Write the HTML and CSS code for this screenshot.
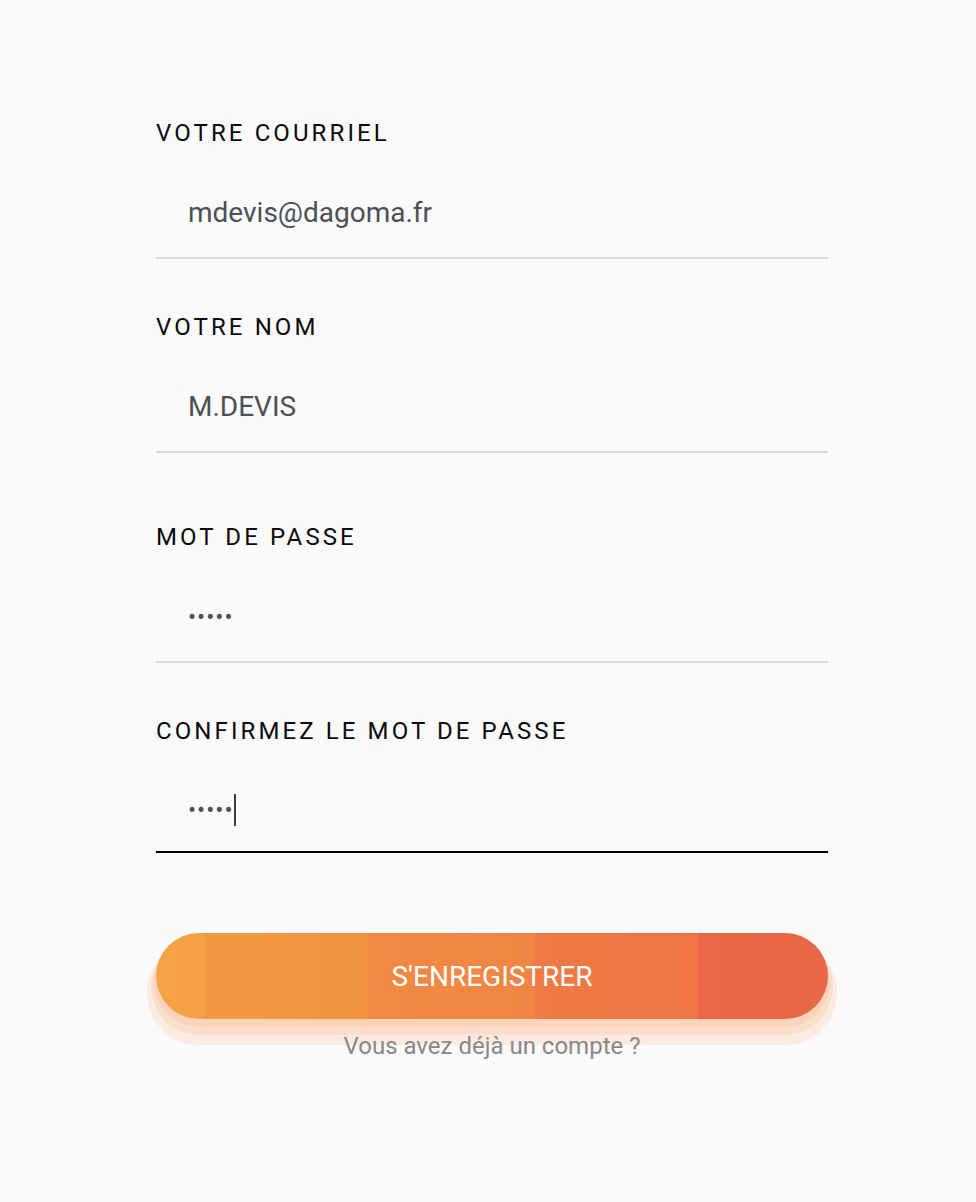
FILE: index.html
```html
<!DOCTYPE html>
<html lang="fr">
<head>
<meta charset="utf-8">
<title>S'enregistrer</title>
<link rel="stylesheet" href="styles.css">
</head>
<body>
<main class="page">
  <form class="form">
    <div class="field">
      <label class="label">VOTRE COURRIEL</label>
      <div class="control"><span class="value">mdevis@dagoma.fr</span></div>
    </div>
    <div class="field field-gap">
      <label class="label">VOTRE NOM</label>
      <div class="control"><span class="value">M.DEVIS</span></div>
    </div>
    <div class="field">
      <label class="label">MOT DE PASSE</label>
      <div class="control"><span class="dots">•••••</span></div>
    </div>
    <div class="field field-last">
      <label class="label">CONFIRMEZ LE MOT DE PASSE</label>
      <div class="control focused"><span class="dots">•••••</span><span class="caret"></span></div>
    </div>
    <button type="button" class="submit">S'ENREGISTRER</button>
    <p class="login">Vous avez déjà un compte ?</p>
  </form>
</main>
</body>
</html>
```

FILE: styles.css
```css
* { box-sizing: border-box; }
html, body { margin: 0; padding: 0; }
body {
  background: #fafafa;
  font-family: Roboto, "Liberation Sans", Arial, sans-serif;
  width: 976px;
  height: 1202px;
}
.page {
  padding: 121px 148px 0 156px;
}
.form {
  width: 672px;
  display: flex;
  flex-direction: column;
}
.field {
  display: flex;
  flex-direction: column;
  margin-bottom: 56px;
}
.field-gap { margin-bottom: 72px; }
.field-last { margin-bottom: 80px; }
.label {
  font-size: 24px;
  line-height: 24px;
  letter-spacing: 3.1px;
  color: #0a0a0a;
  font-weight: 400;
}
.control {
  margin-top: 26px;
  height: 88px;
  padding: 0 32px 2px;
  border-bottom: 2px solid #d5d8dc;
  display: flex;
  align-items: center;
  color: #4b5057;
  font-size: 28px;
}
.control.focused {
  border-bottom-color: #000;
  height: 84px;
  padding-bottom: 0;
}
.value { line-height: 30px; }
.dots {
  font-size: 24px;
  letter-spacing: 1px;
  line-height: 30px;
  color: #4b5057;
}
.caret {
  width: 2px;
  height: 32px;
  background: #3a3f45;
  margin-left: 0;
}
.submit {
  height: 86px;
  border: none;
  border-radius: 43px;
  color: #fff;
  font-family: Roboto, "Liberation Sans", Arial, sans-serif;
  font-size: 28px;
  padding: 0;
  background: linear-gradient(90deg,
    #f6a345 0, #f5a045 49px,
    #f29843 49px, #f29442 212px,
    #f18a42 212px, #f08543 379px,
    #ef7a45 379px, #ef7545 542px,
    #ea6846 542px, #e96646 100%);
  box-shadow:
    0 6px 0 2px #f9d4ba,
    0 11px 0 5px #fbdfcd,
    0 17px 0 9px #fdebe1;
  cursor: pointer;
}
.login {
  margin: 13px 0 0;
  text-align: center;
  font-size: 24px;
  line-height: 28px;
  color: #888;
  position: relative;
}
```
